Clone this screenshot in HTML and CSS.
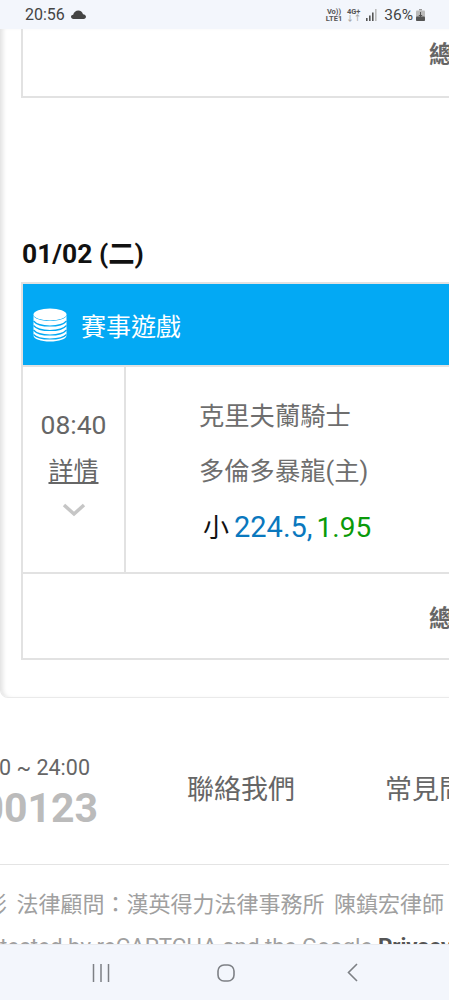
FILE: index.html
```html
<!DOCTYPE html>
<html lang="zh-Hant">
<head>
    <meta charset="UTF-8">
    <meta name="viewport" content="width=device-width, initial-scale=1.0">
    <title>賽事遊戲</title>
    <link rel="stylesheet" href="styles.css">
</head>
<body>
    <div class="status-bar">
        <div class="status-left">
            <span class="clock">20:56</span>
            <svg class="cloud" width="15" height="9" viewBox="0 0 15 9"><path d="M2.5 9C1 9 0 8 0 6.8 0 5.6 1 4.7 2.2 4.7 2.7 2.2 4.9 0.5 7.3 0.5 9.6 0.5 11.5 2 12 4.2 13.7 4.4 15 5.4 15 6.8 15 8 14 9 12.6 9Z" fill="#444"/></svg>
        </div>
        <div class="status-right">
            <span class="net-label">Vo))<br>LTE1</span>
            <span class="net-label net-four">4G+<br><em>↓↑</em></span>
            <svg class="signal" width="12" height="12" viewBox="0 0 12 12">
                <rect x="0" y="9" width="1.6" height="3" fill="#555"/>
                <rect x="3" y="6.5" width="1.6" height="5.5" fill="#555"/>
                <rect x="6" y="3.5" width="1.6" height="8.5" fill="#555"/>
                <rect x="9" y="0" width="1.6" height="12" fill="#bbb"/>
            </svg>
            <span class="battery-text">36%</span>
            <svg class="battery" width="9" height="12" viewBox="0 0 9 12">
                <rect x="3" y="0" width="3" height="1.5" fill="#999"/>
                <rect x="0" y="1.5" width="9" height="10.5" rx="1" fill="#bbb"/>
                <rect x="0" y="7.5" width="9" height="4.5" rx="1" fill="#555"/>
                <path d="M4.5 3V9M2.8 6.5H6.2" stroke="#555" stroke-width="1"/>
            </svg>
        </div>
    </div>

    <div class="page">
        <div class="panel">
            <div class="game-box top-box">
                <div class="total-row top-total"><strong>總計</strong></div>
            </div>

            <h2 class="date-title">01/02 (二)</h2>

            <div class="game-box">
                <div class="game-head">
                    <svg class="coins" width="34" height="34" viewBox="0 0 34 34">
                        <ellipse cx="17" cy="6.5" rx="16.5" ry="6" fill="#fff"/>
                        <path d="M0.5 7V27.500C0.500 31 8 33.500 17 33.500S33.500 31 33.500 27.500V7C33.500 10.500 26 13 17 13S0.500 10.500 0.500 7Z" fill="#fff"/>
                        <path d="M0.500 13C3 16 9 18 17 18S31 16 33.500 13M0.500 17.500C3 20.500 9 22.500 17 22.500S31 20.500 33.500 17.500M0.500 22C3 25 9 27 17 27S31 25 33.500 22M0.500 26.500C3 29.500 9 31 17 31S31 29.500 33.500 26.500" fill="none" stroke="#03a9f4" stroke-width="1.200"/>
                    </svg>
                    <span class="game-name">賽事遊戲</span>
                </div>
                <div class="game-row">
                    <div class="time-cell">
                        <div class="game-time">08:40</div>
                        <a class="detail-link" href="#">詳情</a>
                        <svg class="chevron" width="24" height="14" viewBox="0 0 24 14"><path d="M2 2L12 11L22 2" fill="none" stroke="#c6c6c6" stroke-width="3.500"/></svg>
                    </div>
                    <div class="teams-cell">
                        <div class="team">克里夫蘭騎士</div>
                        <div class="team">多倫多暴龍(主)</div>
                        <div class="bet"><span class="bet-side">小</span><span class="bet-line">224.5,</span><span class="bet-odds">1.95</span></div>
                    </div>
                </div>
                <div class="total-row"><strong>總計</strong></div>
            </div>
        </div>

        <div class="footer-links">
            <div class="service">
                <div class="service-time">09:00 ~ 24:00</div>
                <div class="service-phone">0800-000123</div>
            </div>
            <a class="foot-link contact" href="#">聯絡我們</a>
            <a class="foot-link" href="#">常見問題</a>
        </div>

        <div class="legal">
            <p class="legal-line">影 法律顧問：漢英得力法律事務所 陳鎮宏律師</p>
            <p class="legal-line legal-en">tected by reCAPTCHA and the Google <strong>Privacy Policy</strong></p>
        </div>
    </div>

    <div class="nav-bar">
        <svg width="18" height="18" viewBox="0 0 18 18"><path d="M1.500 0V18M9 0V18M16.500 0V18" stroke="#7d8085" stroke-width="1.500"/></svg>
        <svg class="nav-home" width="18" height="18" viewBox="0 0 18 18"><rect x="1" y="1" width="16" height="16" rx="6" fill="none" stroke="#7d8085" stroke-width="1.600"/></svg>
        <svg class="nav-back" width="11" height="19" viewBox="0 0 11 19"><path d="M10 1L1.500 9.500L10 18" fill="none" stroke="#7d8085" stroke-width="1.600"/></svg>
    </div>
</body>
</html>
```
FILE: styles.css
```css
* {
    box-sizing: border-box;
}

html, body {
    margin: 0;
    height: 1000px;
    overflow: hidden;
}

body {
    width: 449px;
    display: flex;
    flex-direction: column;
    background-color: #fff;
    font-family: Roboto, "Noto Sans CJK TC", sans-serif;
    color: #666;
}

/* phone bars */
.status-bar {
    flex: 0 0 29px;
    display: flex;
    justify-content: space-between;
    align-items: center;
    padding: 0 24px 0 25px;
    background-color: #f3f6fc;
    color: #444;
}

.status-left,
.status-right {
    display: flex;
    align-items: center;
}

.clock {
    font-size: 16px;
}

.cloud {
    margin-left: 6px;
}

.net-label {
    font-size: 7.500px;
    line-height: 7px;
    font-weight: 700;
    text-align: center;
    color: #555;
}

.net-label em {
    font-style: normal;
    color: #aaa;
}

.net-four {
    margin-left: 4px;
}

.signal {
    margin-left: 5px;
}

.battery-text {
    margin-left: 6px;
    font-size: 15.500px;
}

.battery {
    margin-left: 3px;
}

.nav-bar {
    flex: 0 0 56px;
    display: flex;
    align-items: center;
    padding-left: 92px;
    background-color: #f3f6fc;
    border-top: 1px solid #e9ebf0;
}

.nav-home {
    margin-left: 107px;
}

.nav-back {
    margin-left: 112px;
}

/* page */
.page {
    flex: 1;
    overflow: hidden;
}

.panel {
    width: 600px;
    height: 669px;
    padding-left: 20px;
    border-left: 1px solid #e6e6e6;
    border-bottom: 1px solid #eaeaea;
    border-bottom-left-radius: 8px;
    box-shadow: inset 4px 0 4px -2px #e4e4e4;
}

.game-box {
    width: 600px;
    border: 2px solid #e2e2e2;
    border-right: none;
}

.top-box {
    height: 69px;
    border-top: none;
}

.total-row {
    height: 84px;
    display: flex;
    align-items: center;
    padding-left: 406px;
    font-size: 24px;
    white-space: nowrap;
}

.top-total {
    height: 47px;
}

.date-title {
    margin: 139px 0 11px 1px;
    font-size: 26.400px;
    line-height: 34px;
    font-weight: 700;
    color: #111;
}

.game-head {
    height: 81px;
    display: flex;
    align-items: center;
    padding-left: 10px;
    background-color: #03a9f4;
    color: #fff;
}

.game-name {
    margin-left: 14px;
    font-size: 25px;
}

.game-row {
    display: flex;
    height: 209px;
    border-top: 2px solid #e2e2e2;
    border-bottom: 2px solid #e2e2e2;
}

.time-cell {
    flex: 0 0 103px;
    display: flex;
    flex-direction: column;
    align-items: center;
    padding-top: 40px;
    border-right: 2px solid #e2e2e2;
}

.game-time {
    font-size: 26.500px;
    line-height: 36px;
}

.detail-link {
    margin-top: 11px;
    font-size: 25px;
    line-height: 36px;
    color: #666;
    text-decoration: underline;
}

.chevron {
    margin-top: 13px;
}

.teams-cell {
    padding: 32px 0 0 73px;
    font-size: 25.300px;
    color: #6e6e6e;
}

.team {
    line-height: 36px;
    margin-bottom: 19px;
}

.bet {
    margin: 1px 0 0 4px;
    line-height: 36px;
    font-size: 28px;
    white-space: nowrap;
}

.bet-side {
    font-size: 26px;
    color: #111;
}

.bet-line {
    margin-left: 5px;
    font-size: 29px;
    color: #0a78be;
}

.bet-odds {
    margin-left: 4px;
    color: #0a9a0a;
}

/* footer */
.footer-links {
    display: flex;
    align-items: center;
    height: 167px;
    padding-top: 12px;
    border-bottom: 1px solid #e4e4e4;
}

.service {
    flex: 0 0 98px;
    display: flex;
    flex-direction: column;
    align-items: flex-end;
    margin-top: 12px;
    overflow: hidden;
    white-space: nowrap;
}

.service-time {
    font-size: 21.500px;
    line-height: 30px;
    color: #666;
    margin-right: 8px;
}

.service-phone {
    font-size: 41px;
    line-height: 50px;
    font-weight: 700;
    color: #bbb;
}

.foot-link {
    font-size: 27px;
    color: #666;
    text-decoration: none;
    white-space: nowrap;
}

.contact {
    margin: 0 90px 0 89px;
}

.legal {
    padding-top: 25px;
    font-size: 22px;
    white-space: nowrap;
    color: #a0a0a0;
}

.legal-line {
    margin: 0 0 11px -15px;
    line-height: 30px;
    word-spacing: 4px;
}

.legal-en {
    margin-left: 0;
    font-size: 22.300px;
    word-spacing: 0;
}

.legal-en strong {
    color: #555;
}
```
